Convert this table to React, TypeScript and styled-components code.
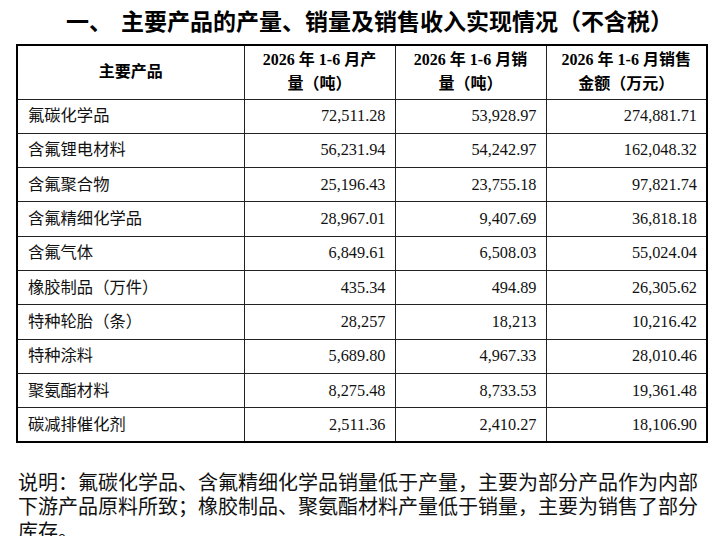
import React from 'react';
import styled, { createGlobalStyle } from 'styled-components';

const GlobalStyle = createGlobalStyle`
  html, body {
    margin: 0;
    padding: 0;
    background: #ffffff;
  }
  body {
    color: #000;
    font-family: "Liberation Serif", "Noto Sans CJK SC", serif;
  }
`;

const Page = styled.div`
  width: 718px;
  height: 536px;
  overflow: hidden;
  background: #fff;
`;

const Title = styled.h1`
  margin: 0;
  padding: 6px 0 0 66px;
  height: 38px;
  box-sizing: border-box;
  font-family: "Noto Sans CJK SC", sans-serif;
  font-size: 23px;
  line-height: 28px;
  font-weight: 700;
  white-space: nowrap;
`;

const Gap = styled.span`
  display: inline-block;
  width: 9px;
`;

const Table = styled.table`
  margin: 6px 0 0 16px;
  width: 690px;
  table-layout: fixed;
  border-collapse: collapse;
  border: 2px solid #000;
`;

const HeadRow = styled.tr`
  height: 54px;
`;

const BodyRow = styled.tr`
  height: 34.3px;
`;

const HeadCell = styled.th`
  box-sizing: border-box;
  height: 54px;
  padding: 0 4px;
  border: 1px solid #222;
  font-family: "Liberation Serif", "Noto Sans CJK SC", serif;
  font-size: 16px;
  line-height: 24px;
  font-weight: 700;
  text-align: center;
  vertical-align: middle;
`;

const Cell = styled.td<{ $num?: boolean }>`
  box-sizing: border-box;
  height: 34.3px;
  padding: 0 ${(p) => (p.$num ? '9px' : '4px')} 0 ${(p) => (p.$num ? '4px' : '10px')};
  border: 1px solid #222;
  font-family: "Liberation Serif", "Noto Sans CJK SC", serif;
  font-size: 16.3px;
  line-height: 18px;
  text-align: ${(p) => (p.$num ? 'right' : 'left')};
  vertical-align: middle;
  white-space: nowrap;
  color: #111;
`;

const Note = styled.p`
  margin: 28px 0 0 18px;
  width: 682px;
  font-family: "Liberation Serif", "Noto Sans CJK SC", serif;
  font-size: 20px;
  line-height: 24.5px;
  color: #111;
`;

const rows: [string, string, string, string][] = [
  ['氟碳化学品', '72,511.28', '53,928.97', '274,881.71'],
  ['含氟锂电材料', '56,231.94', '54,242.97', '162,048.32'],
  ['含氟聚合物', '25,196.43', '23,755.18', '97,821.74'],
  ['含氟精细化学品', '28,967.01', '9,407.69', '36,818.18'],
  ['含氟气体', '6,849.61', '6,508.03', '55,024.04'],
  ['橡胶制品（万件）', '435.34', '494.89', '26,305.62'],
  ['特种轮胎（条）', '28,257', '18,213', '10,216.42'],
  ['特种涂料', '5,689.80', '4,967.33', '28,010.46'],
  ['聚氨酯材料', '8,275.48', '8,733.53', '19,361.48'],
  ['碳减排催化剂', '2,511.36', '2,410.27', '18,106.90'],
];

export default function App() {
  return (
    <Page>
      <GlobalStyle />
      <Title>
        一、<Gap />主要产品的产量、销量及销售收入实现情况（不含税）
      </Title>
      <Table>
        <colgroup>
          <col style={{ width: 227 }} />
          <col style={{ width: 151 }} />
          <col style={{ width: 151 }} />
          <col style={{ width: 161 }} />
        </colgroup>
        <thead>
          <HeadRow>
            <HeadCell>主要产品</HeadCell>
            <HeadCell>
              2026 年 1-6 月产
              <br />
              量（吨）
            </HeadCell>
            <HeadCell>
              2026 年 1-6 月销
              <br />
              量（吨）
            </HeadCell>
            <HeadCell>
              2026 年 1-6 月销售
              <br />
              金额（万元）
            </HeadCell>
          </HeadRow>
        </thead>
        <tbody>
          {rows.map((r) => (
            <BodyRow key={r[0]}>
              <Cell>{r[0]}</Cell>
              <Cell $num>{r[1]}</Cell>
              <Cell $num>{r[2]}</Cell>
              <Cell $num>{r[3]}</Cell>
            </BodyRow>
          ))}
        </tbody>
      </Table>
      <Note>
        说明：氟碳化学品、含氟精细化学品销量低于产量，主要为部分产品作为内部下游产品原料所致；橡胶制品、聚氨酯材料产量低于销量，主要为销售了部分库存。
      </Note>
    </Page>
  );
}
